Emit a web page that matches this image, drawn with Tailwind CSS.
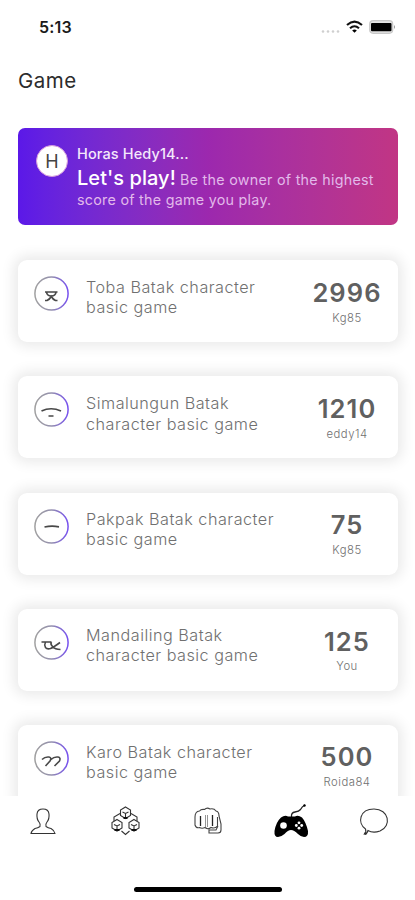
<!DOCTYPE html>
<html lang="en">
<head>
<meta charset="utf-8">
<meta name="viewport" content="width=device-width, initial-scale=1">
<title>Game</title>
<script src="https://cdn.jsdelivr.net/npm/@tailwindcss/browser@4"></script>
</head>
<body class="bg-white">
<svg class="absolute h-0 w-0" aria-hidden="true"><defs><linearGradient id="ring"><stop offset="0" stop-color="#a0a0a0"/><stop offset=".5" stop-color="#9490ae"/><stop offset="1" stop-color="#7650ef"/></linearGradient></defs></svg>
<div class="flex h-[900px] w-[415px] flex-col overflow-hidden bg-white font-['Inter',sans-serif] text-[#707070]">
  <header class="flex h-[52px] shrink-0 items-center justify-between pt-px pr-[19px] pl-[39px] text-black">
    <span class="text-[16px] leading-5 font-semibold tracking-[0.2px] text-[#1a1a1a]">5:13</span>
    <div class="flex items-center">
      <svg class="mr-[6px] h-4 w-[19px]" viewBox="0 0 19 16" fill="#cfcfcf"><circle cx="2" cy="12.500" r="1.300"/><circle cx="7" cy="12.500" r="1.300"/><circle cx="12" cy="12.500" r="1.300"/><circle cx="17" cy="12.500" r="1.300"/></svg>
      <svg class="mr-[6px] h-[14px] w-[17px]" viewBox="0 0 17 14" fill="none" stroke="#111" stroke-width="2.100"><path d="M1 5Q8.500-1.800 16 5M4 8.200Q8.500 4.300 13 8.200"/><path d="M8.500 12.800L6.200 10.500Q8.500 8.500 10.800 10.500Z" fill="#000" stroke="none"/></svg>
      <svg class="h-[14px] w-[27px]" viewBox="0 0 27 14"><rect x=".7" y=".7" width="23" height="12.600" rx="3.500" fill="#e4e4e4" stroke="#c8c8c8" stroke-width="1.200"/><rect x="2" y="3" width="20.500" height="8.300" rx="1" fill="#000"/><path d="M25 5Q27 7 25 9Z" fill="#999"/></svg>
    </div>
  </header>
  <h1 class="h-[76px] shrink-0 pt-[15px] pl-[18px] text-[20.500px] leading-7 font-normal tracking-[0.5px] text-[#2c2c2c]">Game</h1>
  <section class="mx-[18px] mr-[17px] flex h-[97px] shrink-0 rounded-[7px] bg-linear-to-r from-[#5b18e8] via-[#9c28ae] to-[#c13584] pt-[17px] pl-[18px] text-white">
    <div class="mr-[9px] flex size-8 items-center justify-center rounded-full border border-[#d59bdc] bg-white text-[18px] text-[#444]">H</div>
    <div>
      <p class="text-[14.500px] leading-[18px] font-medium tracking-[0.12px] text-[#f4e8fb]">Horas Hedy14...</p>
      <p class="mt-[5px] w-[320px] text-[14.300px] leading-5 tracking-[0.27px] whitespace-nowrap text-[#e2b9ea]"><span class="text-[20px] font-medium tracking-[0.05px] text-white">Let's play!</span> Be the owner of the highest<br>score of the game you play.</p>
    </div>
  </section>
  <main class="flex h-[571px] shrink-0 flex-col gap-[34.250px] overflow-hidden pt-[35px] pr-[17px] pl-[18px]">
    <article class="flex h-[82px] shrink-0 rounded-[9px] bg-white pt-4 pl-4 shadow-[0_0_14px_4px_rgba(0,0,0,0.09)]">
      <svg class="size-[35px] shrink-0" viewBox="0 0 35 35" fill="none" stroke="#484848" stroke-width="1.700"><circle cx="17.500" cy="17.500" r="16.600" stroke="url(#ring)" stroke-width="1.500"/><path d="M11 16H23.500M12.500 16Q13 20 17.300 20T22 16M11 24.500H13Q15.500 23.500 17.300 20.500Q19 23.500 21.500 24.500H23.500"/></svg>
      <p class="mt-px ml-[17px] w-[210px] text-[16.200px] leading-[20.300px] font-light tracking-[0.5px]">Toba Batak character<br>basic game</p>
      <div class="w-[102px] pt-px text-center"><p class="text-[25.500px] leading-8 font-semibold tracking-[1.100px] text-[#606060]">2996</p><p class="mt-px text-[11.300px] leading-4 font-light tracking-[0.5px]">Kg85</p></div>
    </article>
    <article class="flex h-[82px] shrink-0 rounded-[9px] bg-white pt-4 pl-4 shadow-[0_0_14px_4px_rgba(0,0,0,0.09)]">
      <svg class="size-[35px] shrink-0" viewBox="0 0 35 35" fill="none" stroke="#484848" stroke-width="1.700"><circle cx="17.500" cy="17.500" r="16.600" stroke="url(#ring)" stroke-width="1.500"/><path d="M7.500 19Q17 14.500 27 19M14.500 24H19.500"/></svg>
      <p class="mt-px ml-[17px] w-[210px] text-[16.200px] leading-[20.300px] font-light tracking-[0.5px]">Simalungun Batak<br>character basic game</p>
      <div class="w-[102px] pt-px text-center"><p class="text-[25.500px] leading-8 font-semibold tracking-[1.100px] text-[#606060]">1210</p><p class="mt-px text-[11.300px] leading-4 font-light tracking-[0.5px]">eddy14</p></div>
    </article>
    <article class="flex h-[82px] shrink-0 rounded-[9px] bg-white pt-4 pl-4 shadow-[0_0_14px_4px_rgba(0,0,0,0.09)]">
      <svg class="size-[35px] shrink-0" viewBox="0 0 35 35" fill="none" stroke="#484848" stroke-width="1.700"><circle cx="17.500" cy="17.500" r="16.600" stroke="url(#ring)" stroke-width="1.500"/><path d="M10.500 18Q17.500 16.500 25 17.800"/></svg>
      <p class="ml-[17px] w-[210px] text-[16.200px] leading-[20.300px] font-light tracking-[0.5px]">Pakpak Batak character<br>basic game</p>
      <div class="w-[102px] text-center"><p class="text-[25.500px] leading-8 font-semibold tracking-[1.100px] text-[#606060]">75</p><p class="mt-px text-[11.300px] leading-4 font-light tracking-[0.5px]">Kg85</p></div>
    </article>
    <article class="flex h-[82px] shrink-0 rounded-[9px] bg-white pt-4 pl-4 shadow-[0_0_14px_4px_rgba(0,0,0,0.09)]">
      <svg class="size-[35px] shrink-0" viewBox="0 0 35 35" fill="none" stroke="#484848" stroke-width="1.600"><circle cx="17.500" cy="17.500" r="16.600" stroke="url(#ring)" stroke-width="1.500"/><path d="M7.500 17H17.500M11.500 17Q10 20 11.500 22.500Q13 24.500 16.500 23.500Q20 22 26 17.500M17.500 17Q16 19 18.500 21.500Q21 24.500 26.500 24.500"/></svg>
      <p class="ml-[17px] w-[210px] text-[16.200px] leading-[20.300px] font-light tracking-[0.5px]">Mandailing Batak<br>character basic game</p>
      <div class="w-[102px] pt-px text-center"><p class="text-[25.500px] leading-8 font-semibold tracking-[1.100px] text-[#606060]">125</p><p class="text-[11.300px] leading-4 font-light tracking-[0.5px]">You</p></div>
    </article>
    <article class="flex h-[82px] shrink-0 rounded-[9px] bg-white pt-4 pl-4 shadow-[0_0_14px_4px_rgba(0,0,0,0.09)]">
      <svg class="size-[35px] shrink-0" viewBox="0 0 35 35" fill="none" stroke="#484848" stroke-width="1.600"><circle cx="17.500" cy="17.500" r="16.600" stroke="url(#ring)" stroke-width="1.500"/><path d="M8 18.500Q11 15.500 15 16Q18 16.500 16 20L11.500 25M17 18.500Q20 15.500 24 16Q27 16.500 25.500 20L20.500 25"/></svg>
      <p class="mt-px ml-[17px] w-[210px] text-[16.200px] leading-[20.300px] font-light tracking-[0.5px]">Karo Batak character<br>basic game</p>
      <div class="w-[102px] text-center"><p class="text-[25.500px] leading-8 font-semibold tracking-[1.100px] text-[#606060]">500</p><p class="mt-px text-[11.300px] leading-4 font-light tracking-[0.5px]">Roida84</p></div>
    </article>
  </main>
  <nav class="grid h-[91px] shrink-0 grid-cols-5 justify-items-center bg-white pt-[6px]">
    <svg class="h-9 w-9" viewBox="0 0 36 36" fill="none" stroke="#333" stroke-width="1.100"><path d="M16 24.500Q17 22.500 15 20Q12.500 17 13 12Q13.500 7 19 7T25 12Q25.500 17 23 20Q21 22.500 22 24.500Q24 26 27 26.500Q30.500 28.500 31 31.500H7Q7.500 28.500 11 26.500Q14 26 16 24.500Z"/></svg>
    <svg class="h-9 w-9" viewBox="0 0 36 36" fill="none" stroke="#333" stroke-width="1.100"><path id="cube" d="M18.500 5L23.500 8V13.500L18.500 16.500L13.500 13.500V8ZM15.500 10L18.500 11.500L21.500 10M18.500 11.500V15"/><use href="#cube" x="-8.500" y="12.500"/><use href="#cube" x="8.500" y="12.500"/><path d="M13 11.500L7 15V19M24 11.500L30 15V19M14.500 29L18.500 32.500L22.500 29"/><path d="M16.500 16H20.500M7.500 28H12.500M24.500 28H29.500" stroke="#111" stroke-width="1.800"/></svg>
    <svg class="h-9 w-9" viewBox="0 0 36 36" fill="none" stroke="#444" stroke-width="1.100"><path d="M5 15Q5 9.500 9.500 9Q11 7 14.500 7.500Q17 5 20 7Q24 6 26 9Q29 9.500 29 14L31 22V28Q31 31 28 31H19V27M5 15V23Q6 26.500 9.500 25.500Q12 27 15 25.500Q18 28 21 25.500Q25 27 27.500 24V15M19 28H26L28 24"/><path d="M10.500 14V24M22.500 13V24" stroke="#222" stroke-width="1.300"/><path d="M15.500 13V25M17.500 13V25" stroke="#888" stroke-width=".9"/></svg>
    <svg class="h-9 w-9" viewBox="0 0 36 36"><path d="M18.500 15Q18 10.500 22 10Q26 9.500 27.500 7.500Q29 4.500 32 3" fill="none" stroke="#222" stroke-width="1.300"/><circle cx="31.500" cy="3.500" r="1.200"/><path d="M8 15.500Q12 12.500 15 14.500H22Q25 12.500 29 15.500Q33 20 35 29Q35.500 35 31 35Q28 35 25 32Q21 28 18 28Q15 28 11.500 32Q8 35 5 35Q1 35 1.500 29Q3 20 8 15.500Z" fill="#000"/><circle cx="10.500" cy="23.500" r="3.300" fill="#fff"/><g fill="#fff"><circle cx="26" cy="20.800" r="1.400"/><circle cx="26" cy="26.200" r="1.400"/><circle cx="23.300" cy="23.500" r="1.400"/><circle cx="28.700" cy="23.500" r="1.400"/></g></svg>
    <svg class="h-9 w-9" viewBox="0 0 36 36" fill="none" stroke="#333" stroke-width="1.100"><path d="M9.500 27C1 21 3.500 7 18 7C33 7 36 24 24 29Q17 31.500 12 28.500Q11 32 8.500 32Q10.500 30 9.500 27Z"/><circle cx="9.500" cy="31.500" r=".8" fill="#222"/></svg>
  </nav>
  <div class="mx-auto h-[5px] w-[148px] shrink-0 rounded-full bg-black"></div>
</div>
</body>
</html>
